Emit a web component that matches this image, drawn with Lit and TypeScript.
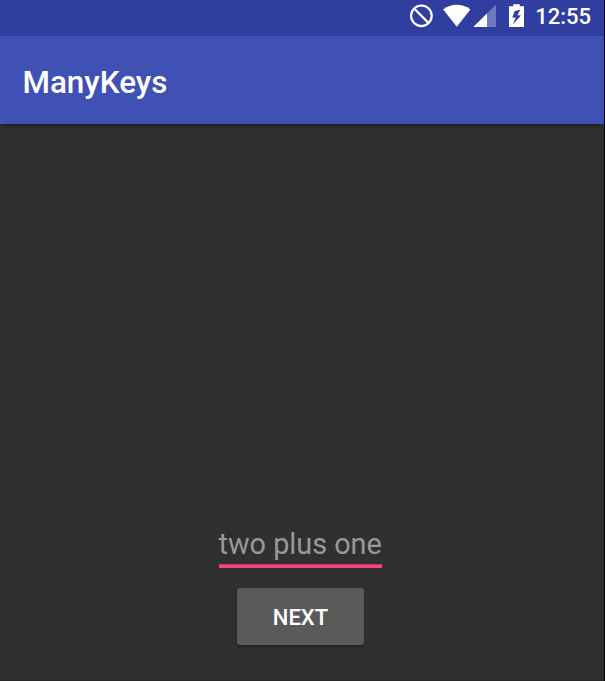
import { LitElement, html, css } from "lit";
import { customElement } from "lit/decorators.js";

@customElement("status-bar")
class StatusBar extends LitElement {
  static styles = css`
    :host {
      display: flex;
      justify-content: flex-end;
      align-items: flex-start;
      height: 36px;
      box-sizing: border-box;
      padding-right: 13px;
      background: #303f9f;
      color: #fff;
    }
    .icons { display: block; width: 120px; height: 32px; margin-right: 6px; }
    .clock {
      font: 500 22px/32px Roboto, sans-serif;
      padding-top: 1px;
      white-space: nowrap;
    }
  `;
  render() {
    return html`
      <svg class="icons" viewBox="409 0 120 32" aria-hidden="true">
        <g fill="none" stroke="#fff" stroke-width="2.2">
          <circle cx="421.4" cy="15.8" r="10.3" />
          <path d="M414.1 8.5 428.7 23.1" />
        </g>
        <path fill="#fff" d="M443.2 9.4Q449.3 4.8 456.8 4.8T470.4 9.4L456.8 26.8Z" />
        <path fill="#fff" fill-opacity=".3" d="M496 4.6V27H473.3Z" />
        <path fill="#fff" d="M487 13.5V27H473.3Z" />
        <path
          fill="#fff"
          fill-rule="evenodd"
          d="M513.2 4.2H519.8V6.3H524V27H509V6.3H513.2ZM520.4 9.4 514.6 11.2 512.3 17.6 515.8 17.8 512.8 24.6 521 15.4 517.4 15.2Z"
        />
      </svg>
      <span class="clock">12:55</span>
    `;
  }
}

@customElement("app-root")
class AppRoot extends LitElement {
  static styles = css`
    :host {
      display: flex;
      flex-direction: column;
      height: 681px;
      width: 605px;
      box-sizing: border-box;
      border-right: 1px solid #000;
      background: #303030;
      color: #fff;
      font-family: Roboto, sans-serif;
      overflow: hidden;
    }
    .toolbar {
      display: flex;
      align-items: center;
      height: 88px;
      box-sizing: border-box;
      padding: 5px 23px 0 22.5px;
      background: #3f51b5;
      box-shadow: 0 3px 4px -1px rgba(0, 0, 0, 0.4);
    }
    .title { margin: 0; font-size: 31.4px; font-weight: 500; line-height: 40px; }
    .content {
      flex: 1;
      display: flex;
      flex-direction: column;
      align-items: center;
      justify-content: flex-end;
      padding: 0 4px 35px 0;
      border-bottom: 1px solid #292929;
      box-sizing: border-box;
    }
    .field {
      box-sizing: border-box;
      width: 163px;
      height: 45px;
      padding-top: 1px;
      background: linear-gradient(#b83a64 1px, #ff4081 1px) bottom / 100% 4px no-repeat;
      color: #989898;
      font-size: 28.8px;
      line-height: 40px;
      white-space: nowrap;
    }
    .next {
      width: 127px;
      height: 57px;
      margin: 20px 0 0;
      padding: 3px 0 0 1px;
      border: 0;
      border-radius: 3px;
      background: #5a5a5b;
      color: #fff;
      font: 500 22px/30px Roboto, sans-serif;
      box-shadow: 0 2px 3px rgba(0, 0, 0, 0.3);
    }
  `;
  render() {
    return html`
      <status-bar></status-bar>
      <header class="toolbar"><h1 class="title">ManyKeys</h1></header>
      <main class="content">
        <div class="field">two plus one</div>
        <button class="next">NEXT</button>
      </main>
    `;
  }
}
